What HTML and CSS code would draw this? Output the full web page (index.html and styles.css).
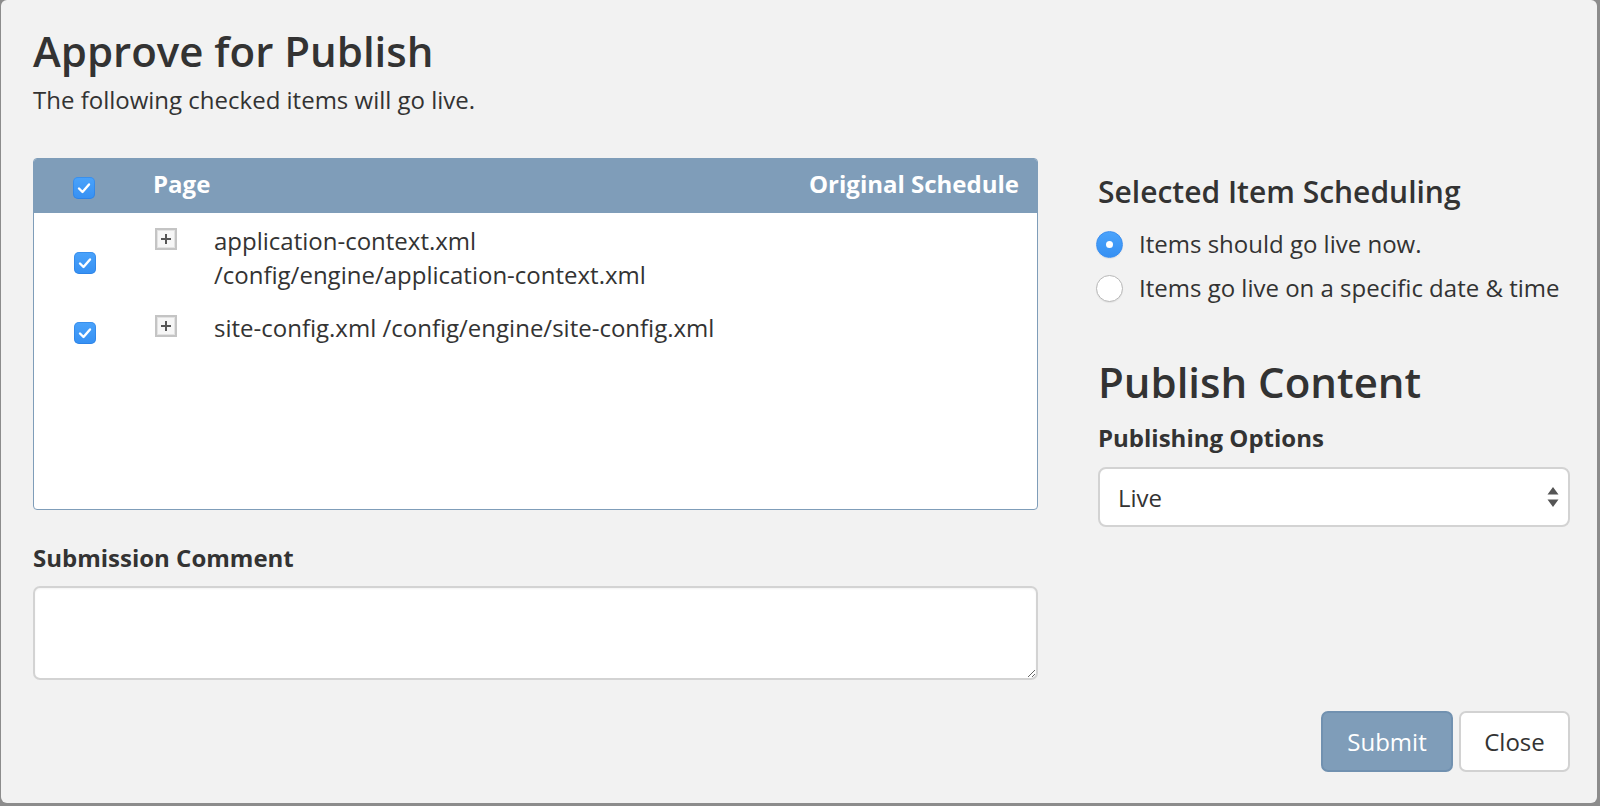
FILE: index.html
```html
<!DOCTYPE html>
<html>
<head>
<meta charset="utf-8">
<title>Approve for Publish</title>
<link rel="stylesheet" href="styles.css">
</head>
<body>
<div class="modal">
  <h1 class="title">Approve for Publish</h1>
  <p class="subtitle">The following checked items will go live.</p>
  <div class="columns">
    <div class="left">
      <div class="items">
        <div class="row head">
          <div class="c-check"><span class="cb"><svg viewBox="0 0 22 22" width="22" height="22"><path d="M6 11.5 L9.5 15 L16 7.5" fill="none" stroke="#fff" stroke-width="2.4" stroke-linecap="round" stroke-linejoin="round"/></svg></span></div>
          <div class="c-page">Page</div>
          <div class="c-sched">Original Schedule</div>
        </div>
        <div class="row item">
          <div class="c-check"><span class="cb"><svg viewBox="0 0 22 22" width="22" height="22"><path d="M6 11.5 L9.5 15 L16 7.5" fill="none" stroke="#fff" stroke-width="2.4" stroke-linecap="round" stroke-linejoin="round"/></svg></span></div>
          <div class="c-page">
            <span class="expander"><svg viewBox="0 0 22 22" width="22" height="22"><path d="M11 6 V16 M6 11 H16" stroke="#555" stroke-width="2"/></svg></span>
            <div class="name"><span class="nw">application-context.xml</span> <span class="nw">/config/engine/application-context.xml</span></div>
          </div>
          <div class="c-sched"></div>
        </div>
        <div class="row item">
          <div class="c-check"><span class="cb"><svg viewBox="0 0 22 22" width="22" height="22"><path d="M6 11.5 L9.5 15 L16 7.5" fill="none" stroke="#fff" stroke-width="2.4" stroke-linecap="round" stroke-linejoin="round"/></svg></span></div>
          <div class="c-page">
            <span class="expander"><svg viewBox="0 0 22 22" width="22" height="22"><path d="M11 6 V16 M6 11 H16" stroke="#555" stroke-width="2"/></svg></span>
            <div class="name"><span class="nw">site-config.xml</span> <span class="nw">/config/engine/site-config.xml</span></div>
          </div>
          <div class="c-sched"></div>
        </div>
      </div>
      <label class="field-label comment-label">Submission Comment</label>
      <textarea class="comment"></textarea>
    </div>
    <div class="right">
      <h4 class="sched-title">Selected Item Scheduling</h4>
      <div class="radio-row"><span class="radio on"></span><span class="radio-label">Items should go live now.</span></div>
      <div class="radio-row"><span class="radio"></span><span class="radio-label">Items go live on a specific date &amp; time</span></div>
      <h3 class="publish-title">Publish Content</h3>
      <label class="field-label options-label">Publishing Options</label>
      <div class="select">
        <span class="select-value">Live</span>
        <svg class="select-arrows" viewBox="0 0 12 22" width="12" height="22"><path d="M6 1 L11.5 8.5 H0.5 Z M6 21 L11.5 13.5 H0.5 Z" fill="#555"/></svg>
      </div>
    </div>
  </div>
  <div class="footer">
    <button class="btn btn-primary">Submit</button>
    <button class="btn btn-default">Close</button>
  </div>
</div>
</body>
</html>
```
FILE: styles.css
```css
* { box-sizing: border-box; }
html, body { margin: 0; height: 100%; }
body {
  background: #8c8c8c;
  font-family: "Open Sans", "Liberation Sans", sans-serif;
  color: #333;
  overflow: hidden;
}
.modal {
  margin-left: 1px;
  width: 1596px;
  height: 803px;
  background: #f2f2f2;
  border-radius: 6px;
  padding: 28px 27px 0 32px;
}
.title {
  margin: 0;
  font-size: 42px;
  line-height: 46px;
  font-weight: 600;
}
.subtitle {
  margin: 9px 0 0;
  font-size: 24px;
  line-height: 34px;
}
.columns {
  display: flex;
  gap: 60px;
  margin-top: 41px;
}
.left { width: 1005px; flex: none; }
.right { flex: 1; padding-top: 17px; }

.items {
  height: 352px;
  border: 1px solid #7f9db9;
  border-radius: 4px;
  background: #fff;
  overflow: hidden;
}
.row { display: flex; }
.head {
  height: 54px;
  background: #7f9db9;
  color: #fff;
  font-weight: 700;
  font-size: 24px;
  line-height: 34px;
  padding-top: 8px;
}
.c-check { width: 121px; flex: none; padding-left: 39px; }
.head .c-check { padding-top: 10px; }
.head .c-page { margin-left: -2px; }
.c-page { flex: 1; display: flex; align-items: flex-start; min-width: 0; }
.c-sched { width: 228px; flex: none; text-align: right; padding-right: 19px; white-space: nowrap; }

.cb {
  display: block;
  width: 22px;
  height: 22px;
  border-radius: 5px;
  background: linear-gradient(#4aa3fb, #3690f3);
  box-shadow: inset 0 0 0 1px rgba(30, 110, 210, 0.35);
}
.cb svg { display: block; }

.item {
  font-size: 24px;
  line-height: 34px;
  padding: 11px 0 8px;
}
.item .c-check { align-self: center; padding-left: 40px; margin-top: 10px; }
.expander {
  flex: none;
  width: 22px;
  height: 22px;
  margin-top: 4px;
  margin-right: 37px;
  border: 2px solid #c4c4c4;
  background: #f6f6f6;
  box-shadow: inset 0 0 0 1px #e2e2e2;
}
.expander svg { display: block; margin: -2px; }
.name { flex: 1; min-width: 0; }
.nw { white-space: nowrap; }

.field-label {
  display: block;
  font-weight: 700;
  font-size: 24px;
  line-height: 34px;
}
.comment-label { margin-top: 31px; }
.comment {
  display: block;
  width: 100%;
  height: 94px;
  margin-top: 11px;
  border: 2px solid #d3d3d3;
  border-radius: 7px;
  background: #fff;
  resize: vertical;
  font: inherit;
  box-shadow: inset 0 1px 2px rgba(0, 0, 0, 0.05);
}

.sched-title {
  margin: 0;
  font-size: 30px;
  line-height: 33px;
  font-weight: 600;
}
.radio-row {
  display: flex;
  align-items: center;
  height: 44px;
  font-size: 24px;
  line-height: 34px;
}
.sched-title + .radio-row { margin-top: 14px; }
.radio {
  width: 27px;
  height: 27px;
  margin-left: -2px;
  margin-right: 16px;
  border-radius: 50%;
  background: #fff;
  border: 1px solid #b8b8b8;
  box-shadow: 0 1px 1px rgba(0, 0, 0, 0.06);
  flex: none;
  position: relative;
}
.radio.on {
  background: linear-gradient(#4aa3fb, #3690f3);
  border-color: #3a8ef0;
}
.radio.on::after {
  content: "";
  position: absolute;
  left: 9px;
  top: 9px;
  width: 7px;
  height: 7px;
  border-radius: 50%;
  background: #fff;
}
.publish-title {
  margin: 49px 0 0;
  font-size: 42px;
  line-height: 46px;
  font-weight: 600;
}
.options-label { margin-top: 16px; }
.select {
  margin-top: 12px;
  height: 60px;
  background: #fff;
  border: 2px solid #d3d3d3;
  border-radius: 8px;
  display: flex;
  align-items: center;
  justify-content: space-between;
  padding: 0 9px 0 18px;
  font-size: 24px;
}
.select-arrows { display: block; }

.footer {
  display: flex;
  justify-content: flex-end;
  gap: 6px;
  margin-top: 31px;
}
.btn {
  height: 61px;
  border-radius: 7px;
  font-family: inherit;
  font-size: 24px;
  padding: 0;
}
.btn-primary {
  width: 132px;
  background: #7f9db9;
  border: 2px solid #7191b0;
  color: #fff;
}
.btn-default {
  width: 111px;
  background: #fff;
  border: 2px solid #d2d2d2;
  color: #333;
}
```
